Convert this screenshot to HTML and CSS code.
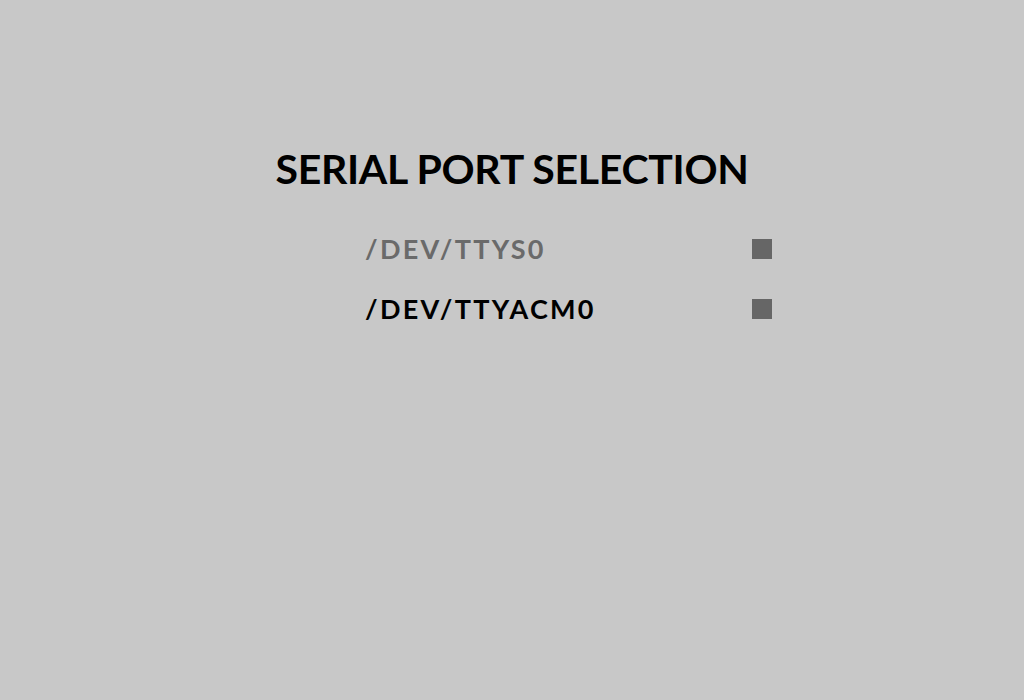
FILE: index.html
```html
<!DOCTYPE html>
<html>
<head>
<meta charset="utf-8">
<link rel="stylesheet" href="styles.css">
</head>
<body>
<main class="screen">
  <h1 class="title">SERIAL PORT SELECTION</h1>
  <ul class="ports">
    <li class="port port-dim"><span class="port-name">/DEV/TTYS0</span><span class="box"></span></li>
    <li class="port port-active"><span class="port-name">/DEV/TTYACM0</span><span class="box"></span></li>
  </ul>
</main>
</body>
</html>
```

FILE: styles.css
```css
html, body {
  margin: 0;
  padding: 0;
  background: #c8c8c8;
  width: 1024px;
  height: 700px;
  overflow: hidden;
}
.screen {
  display: flex;
  flex-direction: column;
  align-items: center;
  font-family: "Lato", "DejaVu Sans", sans-serif;
}
.title {
  margin: 144px 0 0 0;
  font-size: 41px;
  line-height: 50px;
  font-weight: 700;
  color: #000;
  letter-spacing: -0.3px;
}
.ports {
  list-style: none;
  margin: 39px 0 0 113px;
  padding: 0;
  width: 407px;
  display: flex;
  flex-direction: column;
  gap: 30px;
}
.port {
  display: flex;
  justify-content: space-between;
  align-items: center;
  height: 30px;
  font-size: 27px;
  font-weight: 700;
  letter-spacing: 2.3px;
}
.port-dim { color: #6a6a6a; }
.port-active { color: #000; }
.box {
  width: 20px;
  height: 20px;
  margin-top: 2px;
  background: #666666;
}
```
